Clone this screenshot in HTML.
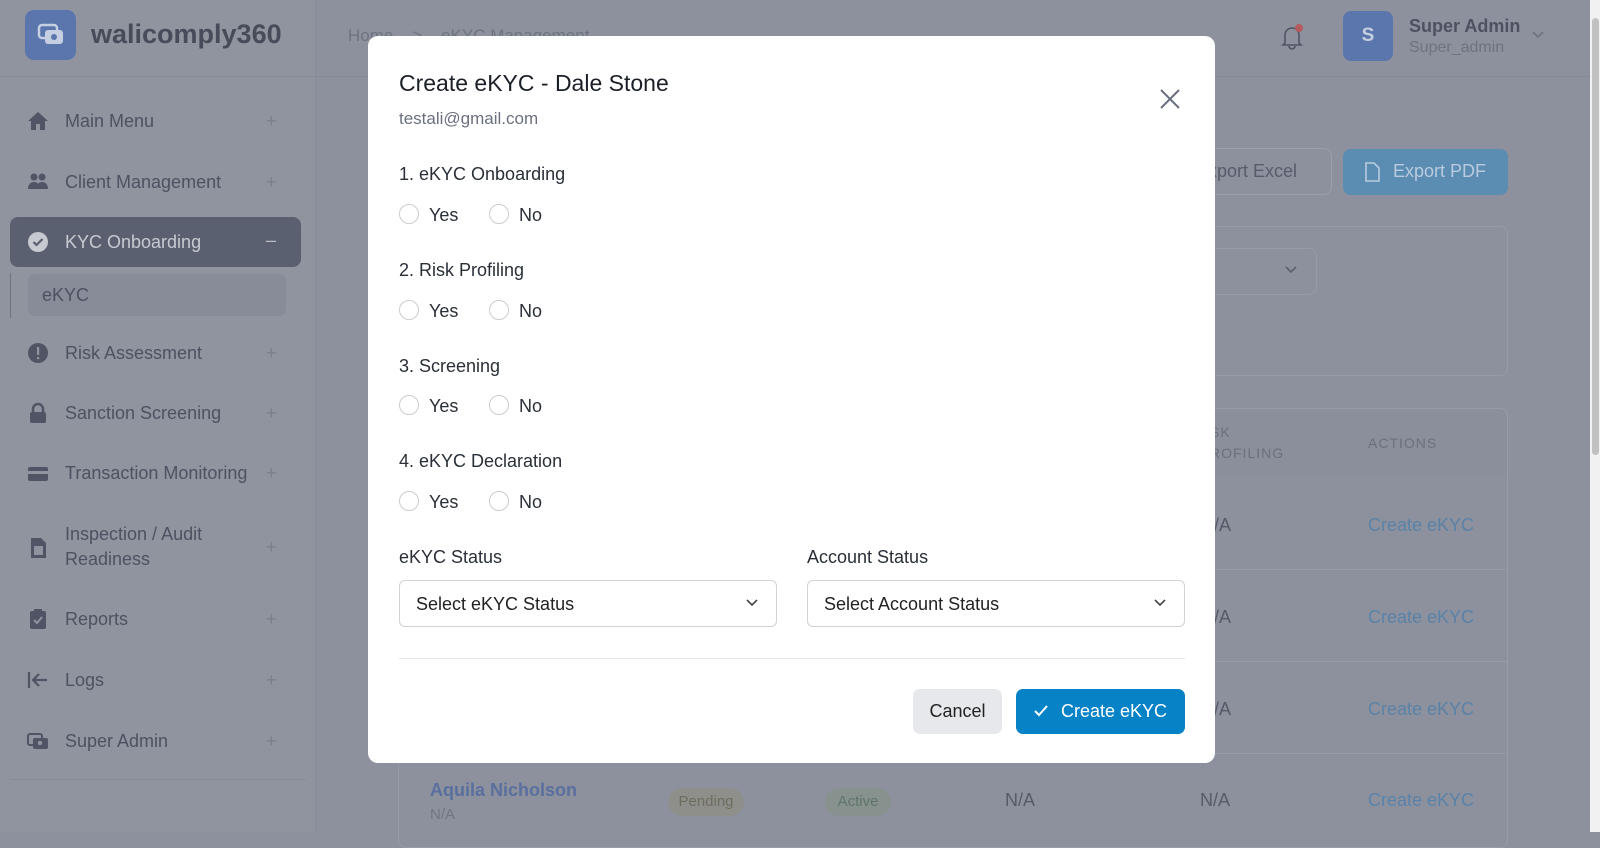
<!DOCTYPE html>
<html><head><meta charset="utf-8"><style>
*{box-sizing:border-box;margin:0;padding:0}
body{width:1600px;height:832px;overflow:hidden;background:#8c919d;font-family:"Liberation Sans",sans-serif;position:relative}
.a{position:absolute;white-space:nowrap}
.side{left:0;top:0;width:316px;height:832px;background:#90949f;border-right:1px solid #868b96}
.si{position:absolute;left:65px;font-size:18px;color:#4c5261}
.pl{position:absolute;left:266px;font-size:18px;color:#7a7f8b}
.ic{position:absolute;left:27px;width:22px;height:22px}
.m{left:368px;top:36px;width:847px;height:727px;background:#fff;border-radius:10px}
.q{font-size:18px;color:#2a2f38}
.r{width:20px;height:20px;border:1px solid #c9ccd1;border-radius:50%}
.rl{font-size:18px;color:#2a2f38}
.sel{height:47px;border:1px solid #cfd2d7;border-radius:6px;font-size:18px;color:#222;padding:13px 16px}
.row{font-size:18px}
</style></head><body>
<div class="a side"></div>
<div class="a" style="left:0;top:76px;width:316px;height:1px;background:#868b96"></div>
<div class="a" style="left:25px;top:10px;width:51px;height:50px;border-radius:9px;background:#5a76ad"></div>
<svg class="a" style="left:36px;top:22px" width="30" height="26" viewBox="0 0 30 26"><rect x="3" y="3" width="18" height="13" rx="3" fill="none" stroke="#c6cfe2" stroke-width="2.5"/><rect x="9" y="8" width="18" height="14" rx="3" fill="#c6cfe2"/><circle cx="18" cy="15" r="3" fill="#5a76ad"/></svg>
<div class="a" style="left:91px;top:19px;font-size:27px;font-weight:bold;color:#464c59">walicomply360</div>

<svg class="ic" style="top:110px" viewBox="0 0 22 22"><path d="M11 2L1 11h3v9h5v-6h4v6h5v-9h3z" fill="#4f5564"/></svg>
<div class="si" style="top:111px">Main Menu</div><div class="pl" style="top:111px">+</div>
<svg class="ic" style="top:171px" viewBox="0 0 22 22"><circle cx="7" cy="6" r="3.5" fill="#4f5564"/><circle cx="15" cy="6" r="3.5" fill="#4f5564"/><path d="M1 18c0-5 3-7 6-7s6 2 6 7zM10 18c0-5 2-7 5-7s6 2 6 7z" fill="#4f5564"/></svg>
<div class="si" style="top:172px">Client Management</div><div class="pl" style="top:172px">+</div>
<div class="a" style="left:10px;top:217px;width:291px;height:50px;border-radius:8px;background:#5a6070"></div>
<svg class="ic" style="top:231px" viewBox="0 0 22 22"><circle cx="11" cy="11" r="10" fill="#c7cad1"/><path d="M6.5 11l3 3 6-6" stroke="#5a6070" stroke-width="2.2" fill="none"/></svg>
<div class="si" style="top:232px;color:#c7cad1">KYC Onboarding</div><div class="pl" style="top:230px;color:#b8bcc4">–</div>
<div class="a" style="left:10px;top:273px;width:1px;height:45px;background:#6e7380"></div>
<div class="a" style="left:28px;top:274px;width:258px;height:42px;border-radius:7px;background:#878c98"></div>
<div class="si" style="top:285px;left:42px">eKYC</div>
<svg class="ic" style="top:342px" viewBox="0 0 22 22"><circle cx="11" cy="11" r="10" fill="#4f5564"/><rect x="10" y="5" width="2.2" height="8" fill="#90949f"/><rect x="10" y="15" width="2.2" height="2.2" fill="#90949f"/></svg>
<div class="si" style="top:343px">Risk Assessment</div><div class="pl" style="top:343px">+</div>
<svg class="ic" style="top:402px" viewBox="0 0 22 22"><path d="M6 10V7a5 5 0 0110 0v3" stroke="#4f5564" stroke-width="2.5" fill="none"/><rect x="3" y="10" width="16" height="11" rx="2" fill="#4f5564"/></svg>
<div class="si" style="top:403px">Sanction Screening</div><div class="pl" style="top:403px">+</div>
<svg class="ic" style="top:463px" viewBox="0 0 22 22"><rect x="1" y="4" width="20" height="14" rx="2" fill="#4f5564"/><rect x="1" y="8" width="20" height="3" fill="#90949f"/></svg>
<div class="si" style="top:463px">Transaction Monitoring</div><div class="pl" style="top:463px">+</div>
<svg class="ic" style="top:537px" viewBox="0 0 22 22"><path d="M4 1h10l5 5v15H4z" fill="#4f5564"/><rect x="7" y="9" width="9" height="9" fill="#90949f"/></svg>
<div class="si" style="top:524px">Inspection / Audit</div><div class="si" style="top:549px">Readiness</div><div class="pl" style="top:537px">+</div>
<svg class="ic" style="top:608px" viewBox="0 0 22 22"><rect x="3" y="3" width="16" height="18" rx="2" fill="#4f5564"/><rect x="7" y="1" width="8" height="4" fill="#4f5564"/><path d="M7 12l3 3 5-6" stroke="#90949f" stroke-width="2" fill="none"/></svg>
<div class="si" style="top:609px">Reports</div><div class="pl" style="top:609px">+</div>
<svg class="ic" style="top:669px" viewBox="0 0 22 22"><path d="M2 3v16M20 11H7m5-6l-6 6 6 6" stroke="#4f5564" stroke-width="2.2" fill="none"/></svg>
<div class="si" style="top:670px">Logs</div><div class="pl" style="top:670px">+</div>
<svg class="ic" style="top:730px" viewBox="0 0 22 22"><rect x="1" y="4" width="14" height="11" rx="2" fill="none" stroke="#4f5564" stroke-width="2"/><rect x="6" y="8" width="15" height="11" rx="2" fill="#4f5564"/><circle cx="13" cy="13" r="2.2" fill="#90949f"/></svg>
<div class="si" style="top:731px">Super Admin</div><div class="pl" style="top:731px">+</div>
<div class="a" style="left:10px;top:779px;width:296px;height:1px;background:#868b96"></div>

<!-- header -->
<div class="a" style="left:316px;top:76px;width:1274px;height:1px;background:#868b96"></div>
<div class="a" style="left:348px;top:26px;font-size:17px;color:#6e7380">Home &nbsp;&nbsp;&nbsp;&gt;&nbsp;&nbsp;&nbsp; eKYC Management</div>
<svg class="a" style="left:1280px;top:24px" width="24" height="26" viewBox="0 0 24 26"><path d="M5 19V11a7 7 0 0114 0v8l2 2H3z M9 22a3 3 0 006 0" fill="none" stroke="#4f5564" stroke-width="1.6"/><circle cx="19" cy="4" r="4" fill="#b55a5f"/></svg>
<div class="a" style="left:1343px;top:11px;width:50px;height:50px;border-radius:8px;background:#5a76ad;color:#c6cfe2;font-size:19px;font-weight:bold;text-align:center;line-height:50px">S</div>
<div class="a" style="left:1409px;top:16px;font-size:18px;font-weight:bold;color:#4c5261">Super Admin</div>
<div class="a" style="left:1409px;top:39px;font-size:16px;color:#6e7380">Super_admin</div>
<svg class="a" style="left:1531px;top:30px" width="14" height="10" viewBox="0 0 14 10"><path d="M2 2l5 5 5-5" stroke="#6e7380" stroke-width="1.6" fill="none"/></svg>

<!-- main bg content -->
<div class="a" style="left:1150px;top:148px;width:182px;height:47px;border:1px solid #9a9faa;border-radius:8px"></div>
<div class="a" style="left:1208px;top:161px;font-size:18px;color:#565c6a">xport Excel</div>
<div class="a" style="left:1343px;top:149px;width:165px;height:46px;border-radius:8px;background:#5b8cb1"></div>
<svg class="a" style="left:1364px;top:162px" width="16" height="20" viewBox="0 0 16 20"><path d="M2 1h8l5 5v13H2z" fill="none" stroke="#b9cbe0" stroke-width="1.6"/></svg>
<div class="a" style="left:1393px;top:161px;font-size:18px;color:#b9cbe0">Export PDF</div>
<div class="a" style="left:1150px;top:226px;width:358px;height:150px;border:1px solid #979ca7;border-radius:8px"></div>
<div class="a" style="left:1150px;top:248px;width:167px;height:47px;border:1px solid #979ca7;border-radius:8px"></div>
<svg class="a" style="left:1284px;top:265px" width="14" height="10" viewBox="0 0 14 10"><path d="M2 2l5 5 5-5" stroke="#5a606e" stroke-width="1.6" fill="none"/></svg>
<div class="a" style="left:398px;top:408px;width:1110px;height:440px;border:1px solid #979ca7;border-radius:8px"></div>
<div class="a" style="left:399px;top:409px;width:1108px;height:68px;background:#8a8f9b;border-radius:8px 8px 0 0"></div>
<div class="a" style="left:1210px;top:424px;font-size:14px;letter-spacing:1px;color:#6b707d">SK</div>
<div class="a" style="left:1210px;top:445px;font-size:14px;letter-spacing:1px;color:#6b707d">ROFILING</div>
<div class="a" style="left:1368px;top:435px;font-size:14px;letter-spacing:1px;color:#6b707d">ACTIONS</div>
<div class="a row" style="left:1214px;top:515px;color:#555b68">/A</div><div class="a row" style="left:1368px;top:515px;color:#5a82a8">Create eKYC</div>
<div class="a" style="left:399px;top:569px;width:1108px;height:1px;background:#979ca7"></div>
<div class="a row" style="left:1214px;top:607px;color:#555b68">/A</div><div class="a row" style="left:1368px;top:607px;color:#5a82a8">Create eKYC</div>
<div class="a" style="left:399px;top:661px;width:1108px;height:1px;background:#979ca7"></div>
<div class="a row" style="left:1214px;top:699px;color:#555b68">/A</div><div class="a row" style="left:1368px;top:699px;color:#5a82a8">Create eKYC</div>
<div class="a" style="left:399px;top:753px;width:1108px;height:1px;background:#979ca7"></div>
<div class="a" style="left:430px;top:780px;font-size:18px;font-weight:bold;color:#5a6f9e">Aquila Nicholson</div>
<div class="a" style="left:430px;top:806px;font-size:15px;color:#707582">N/A</div>
<div class="a" style="left:668px;top:788px;width:76px;height:28px;border-radius:14px;background:#8e8f8a;color:#6d6c5e;font-size:15px;text-align:center;line-height:28px">Pending</div>
<div class="a" style="left:825px;top:788px;width:66px;height:28px;border-radius:14px;background:#87928f;color:#5f7468;font-size:15px;text-align:center;line-height:28px">Active</div>
<div class="a row" style="left:1005px;top:790px;color:#555b68">N/A</div>
<div class="a row" style="left:1200px;top:790px;color:#555b68">N/A</div>
<div class="a row" style="left:1368px;top:790px;color:#5a82a8">Create eKYC</div>

<!-- scrollbar -->
<div class="a" style="left:1590px;top:0;width:10px;height:832px;background:#f1f1f1"></div>
<div class="a" style="left:1592px;top:18px;width:7px;height:437px;border-radius:4px;background:#c1c1c1"></div>

<!-- modal -->
<div class="a m"></div>
<div class="a" style="left:399px;top:70px;font-size:23px;color:#1b1f27">Create eKYC - Dale Stone</div>
<div class="a" style="left:399px;top:109px;font-size:17px;color:#6b7080">testali@gmail.com</div>
<svg class="a" style="left:1159px;top:88px" width="22" height="22" viewBox="0 0 22 22"><path d="M2 2l18 18M20 2L2 20" stroke="#6b7080" stroke-width="2"/></svg>

<div class="a q" style="left:399px;top:164px">1. eKYC Onboarding</div>
<div class="a r" style="left:399px;top:204px"></div><div class="a rl" style="left:429px;top:205px">Yes</div>
<div class="a r" style="left:489px;top:204px"></div><div class="a rl" style="left:519px;top:205px">No</div>
<div class="a q" style="left:399px;top:260px">2. Risk Profiling</div>
<div class="a r" style="left:399px;top:300px"></div><div class="a rl" style="left:429px;top:301px">Yes</div>
<div class="a r" style="left:489px;top:300px"></div><div class="a rl" style="left:519px;top:301px">No</div>
<div class="a q" style="left:399px;top:356px">3. Screening</div>
<div class="a r" style="left:399px;top:395px"></div><div class="a rl" style="left:429px;top:396px">Yes</div>
<div class="a r" style="left:489px;top:395px"></div><div class="a rl" style="left:519px;top:396px">No</div>
<div class="a q" style="left:399px;top:451px">4. eKYC Declaration</div>
<div class="a r" style="left:399px;top:491px"></div><div class="a rl" style="left:429px;top:492px">Yes</div>
<div class="a r" style="left:489px;top:491px"></div><div class="a rl" style="left:519px;top:492px">No</div>

<div class="a q" style="left:399px;top:547px">eKYC Status</div>
<div class="a q" style="left:807px;top:547px">Account Status</div>
<div class="a sel" style="left:399px;top:580px;width:378px">Select eKYC Status</div>
<div class="a sel" style="left:807px;top:580px;width:378px">Select Account Status</div>
<svg class="a" style="left:745px;top:598px" width="14" height="10" viewBox="0 0 14 10"><path d="M2 2l5 5 5-5" stroke="#444" stroke-width="1.6" fill="none"/></svg>
<svg class="a" style="left:1153px;top:598px" width="14" height="10" viewBox="0 0 14 10"><path d="M2 2l5 5 5-5" stroke="#444" stroke-width="1.6" fill="none"/></svg>
<div class="a" style="left:399px;top:658px;width:786px;height:1px;background:#e3e5e8"></div>
<div class="a" style="left:913px;top:689px;width:89px;height:45px;border-radius:7px;background:#e6e8eb;font-size:18px;color:#222;text-align:center;line-height:45px">Cancel</div>
<div class="a" style="left:1016px;top:689px;width:169px;height:45px;border-radius:7px;background:#0682c7;font-size:18px;color:#fff;line-height:45px;padding-left:45px">Create eKYC</div>
<svg class="a" style="left:1033px;top:704px" width="16" height="14" viewBox="0 0 16 14"><path d="M2 7l4 4 8-9" stroke="#fff" stroke-width="2" fill="none"/></svg>
</body></html>
